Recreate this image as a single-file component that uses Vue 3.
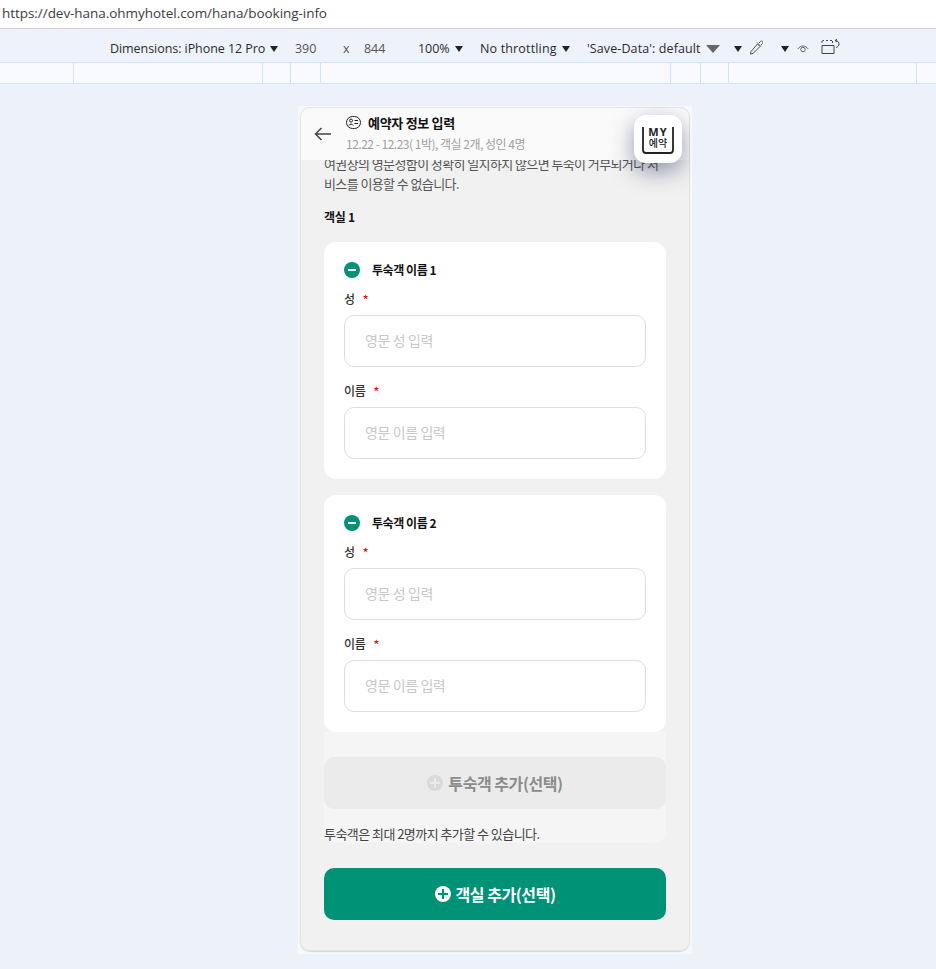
<script setup>
const rulerCols = [74, 189, 28, 30, 350, 30, 28, 188, 19]
const guests = [1, 2]
</script>

<template>
  <div class="page">
    <div class="urlbar">https://dev-hana.ohmyhotel.com/hana/booking-info</div>
    <div class="toolbar">
      <span class="tb w-dim">Dimensions: iPhone 12 Pro<i class="caret"></i></span>
      <span class="tb w-a dim">390</span>
      <span class="tb w-x dim">x</span>
      <span class="tb w-b dim">844</span>
      <span class="tb w-z">100%<i class="caret"></i></span>
      <span class="tb w-t">No throttling<i class="caret"></i></span>
      <span class="tb w-s">'Save-Data': default<i class="caret big"></i></span>
      <i class="caret solo"></i>
      <svg class="pick" width="14" height="15" viewBox="0 0 14 15" fill="none" stroke="#555" stroke-width="1">
        <path d="M8.500 4 11 6.500 4 13.500 1.500 14 2 11.500Z" />
        <path d="M8 2.500 12 6.500M10 3l1.500-1.500a1 1 0 0 1 2 2L12 5" />
      </svg>
      <i class="caret solo2"></i>
      <svg class="eye" width="12" height="10" viewBox="0 0 12 10" fill="none" stroke="#666" stroke-width="1">
        <path d="M.8 5C3.500 1 8.500 1 11.200 5" />
        <circle cx="6" cy="5.500" r="2.200" />
      </svg>
      <svg class="rot" width="20" height="16" viewBox="0 0 20 16" fill="none" stroke="#444" stroke-width="1">
        <path d="M1 6.500h12v8H1z" />
        <path d="M1 4V1.500h2M5 1.500h2M9 1.500h2.500V4" stroke-dasharray="2 1" />
        <path d="M14 1.500c3 0 4 2 4 3.500s-1 3-3 3.500M14 1.500l2-1.200M14 1.500l2 1.300" />
      </svg>
    </div>
    <div class="ruler">
      <span v-for="(w, i) in rulerCols" :key="i" class="tick" :style="{ width: w + 'px' }"></span>
    </div>

    <div class="frame">
      <div class="phone">
        <header class="head">
          <svg class="back" width="18" height="14" viewBox="0 0 18 14" fill="none" stroke="#444" stroke-width="1.500">
            <path d="M17 7H1.500M7.500 1 1.500 7l6 6" />
          </svg>
          <div class="head-text">
            <div class="head-title">
              <svg width="15" height="13" viewBox="0 0 15 13" fill="none" stroke="#222" stroke-width="1">
                <rect x="0.500" y="0.500" width="14" height="12" rx="6" />
                <circle cx="5" cy="4.600" r="1.500" />
                <path d="M2.800 9.500c.4-1.800 4-1.800 4.400 0M8.500 4.500h3.500M8.500 7.500h3.500" />
              </svg>
              <span>예약자 정보 입력</span>
            </div>
            <div class="head-sub">12.22 - 12.23( 1박), 객실 2개, 성인 4명</div>
          </div>
        </header>

        <div class="my-btn">
          <svg class="my-frame" width="32" height="27" viewBox="0 0 32 27" fill="none" stroke="#222" stroke-width="1.800">
            <path d="M1 0v23a3 3 0 0 0 3 3h24a3 3 0 0 0 3-3V0" />
          </svg>
          <span class="my-en">MY</span>
          <span class="my-ko">예약</span>
        </div>

        <div class="scroll">
          <p class="notice">여권상의 영문성함이 정확히 일치하지 않으면 투숙이 거부되거나 서비스를 이용할 수 없습니다.</p>
          <h3 class="room">객실 1</h3>

          <section v-for="n in guests" :key="n" class="card">
            <div class="card-title">
              <span class="minus"><i></i></span>
              <span class="card-name">투숙객 이름 {{ n }}</span>
            </div>
            <label class="lbl lbl-first">성<em>*</em></label>
            <div class="field">영문 성 입력</div>
            <label class="lbl">이름<em>*</em></label>
            <div class="field">영문 이름 입력</div>
          </section>

          <div class="extra">
            <button class="btn btn-off">
              <span class="plus off"></span>투숙객 추가(선택)
            </button>
            <p class="limit">투숙객은 최대 2명까지 추가할 수 있습니다.</p>
          </div>
        </div>

        <button class="btn btn-on">
          <span class="plus on"></span>객실 추가(선택)
        </button>
      </div>
    </div>
  </div>
</template>

<style>
html, body { margin: 0; background: #edf1fa; }
</style>

<style scoped>
.page {
  width: 936px;
  height: 969px;
  overflow: hidden;
  background: #edf1fa;
  font-family: "Noto Sans CJK KR", "Noto Sans", sans-serif;
}
.urlbar {
  box-sizing: border-box;
  height: 29px;
  padding-left: 2px;
  background: #fff;
  border-bottom: 1px solid #d2d2d2;
  font: 13.500px/27px "Open Sans", sans-serif;
  letter-spacing: -0.05px;
  color: #3c3c3c;
}
.toolbar {
  box-sizing: border-box;
  margin-top: 4px;
  height: 29px;
  padding: 2px 0 0 110px;
  display: flex;
  align-items: center;
  background: #eef2fb;
}
.tb {
  font: 12.500px/27px "Open Sans", sans-serif;
  letter-spacing: -0.06px;
  color: #2b2b2b;
  white-space: nowrap;
  display: flex;
  align-items: center;
}
.dim { color: #555; }
.w-dim { width: 185px; }
.w-a { width: 48px; }
.w-x { width: 21px; }
.w-b { width: 54px; }
.w-z { width: 62px; }
.w-t { width: 107px; letter-spacing: 0.16px; }
.w-s { width: 143px; letter-spacing: 0.1px; }
.caret {
  width: 0;
  height: 0;
  margin-left: 5px;
  border-left: 4px solid transparent;
  border-right: 4px solid transparent;
  border-top: 6px solid #222;
}
.caret.big {
  border-left-width: 7px;
  border-right-width: 7px;
  border-top: 8px solid #666;
}
.caret.solo { margin-left: 4px; }
.pick { margin-left: 7px; margin-top: -3px; }
.caret.solo2 { margin-left: 18px; }
.eye { margin-left: 8px; }
.rot { margin-left: 12px; margin-top: -3px; }
.ruler {
  box-sizing: border-box;
  height: 22px;
  display: flex;
  background: #f8faff;
  border-top: 1px solid #d3e2fb;
  border-bottom: 1px solid #d3e2fb;
}
.tick {
  box-sizing: border-box;
  border-right: 1px solid #d3e2fb;
  flex: none;
}
.tick:last-child { border-right: 0; }
.frame {
  width: 390px;
  margin: 22px 0 0 298px;
  padding: 1px 2px 3px;
  background: #f7f8fa;
}
.phone {
  position: relative;
  height: 844px;
  box-sizing: border-box;
  background: #f1f1f1;
  outline: 1px solid #e4e4e2;
  outline-offset: -1px;
  border-radius: 10px;
  box-shadow: 0 1px 1px #d8d8d2;
  overflow: hidden;
  width: 390px;
}
.head {
  height: 53px;
  display: flex;
  align-items: flex-start;
  background: #fafafa;
  box-sizing: border-box;
  padding: 0 0 0 14px;
}
.back { margin-top: 20px; flex: none; }
.head-text { margin-left: 14px; padding-top: 5px; }
.head-title {
  display: flex;
  align-items: center;
  gap: 7px;
  height: 20px;
  font-size: 13px;
  font-weight: 700;
  letter-spacing: -0.3px;
  color: #111;
}
.head-sub {
  margin-top: 2px;
  font-size: 12px;
  line-height: 20px;
  letter-spacing: -0.5px;
  color: #a0a0a0;
}
.my-btn {
  position: absolute;
  left: 334px;
  top: 8px;
  width: 48px;
  height: 48px;
  border-radius: 12px;
  background: #fff;
  box-shadow: 0 8px 22px rgba(50, 55, 95, 0.5);
  text-align: center;
  color: #222;
}
.my-frame { position: absolute; left: 8px; top: 12px; }
.my-en {
  position: absolute;
  left: 0;
  right: 0;
  top: 11px;
  font: 700 11px/11px "Noto Sans", sans-serif;
  letter-spacing: 1px;
}
.my-ko {
  position: absolute;
  left: 0;
  right: 0;
  top: 22px;
  font-size: 10px;
  line-height: 11px;
  font-weight: 500;
}
.scroll {
  height: 683px;
  overflow: hidden;
  padding: 0 24px;
}
.notice {
  margin: -6px 0 0;
  font-size: 13px;
  line-height: 20px;
  letter-spacing: -0.6px;
  word-break: break-all;
  color: #555;
}
.room {
  margin: 13px 0 0;
  font-size: 12px;
  line-height: 20px;
  font-weight: 700;
  color: #111;
  letter-spacing: -0.3px;
}
.card {
  box-sizing: border-box;
  height: 237px;
  margin-top: 15px;
  padding: 18px 20px 20px;
  background: #fff;
  border-radius: 12px;
}
.card + .card { margin-top: 16px; }
.card-title {
  display: flex;
  align-items: center;
  gap: 12px;
  height: 20px;
  font-size: 12px;
  font-weight: 700;
  letter-spacing: -0.45px;
  color: #111;
}
.card-name { margin-top: -1px; }
.minus {
  width: 16px;
  height: 16px;
  border-radius: 50%;
  background: #009277;
  display: flex;
  align-items: center;
  justify-content: center;
}
.minus i {
  width: 8px;
  height: 2px;
  background: #fff;
}
.lbl {
  display: block;
  height: 20px;
  margin-top: 14px;
  font-size: 12px;
  line-height: 20px;
  font-weight: 500;
  letter-spacing: -0.3px;
  color: #333;
}
.lbl-first { margin-top: 9px; }
.lbl em {
  margin-left: 8px;
  font-style: normal;
  color: #f00;
}
.field {
  box-sizing: border-box;
  height: 52px;
  margin-top: 6px;
  padding-left: 20px;
  border: 1px solid #dedede;
  border-radius: 10px;
  font-size: 14px;
  line-height: 49px;
  letter-spacing: -0.4px;
  color: #c8c8c8;
  background: #fff;
}
.extra {
  height: 111px;
  padding-top: 25px;
  box-sizing: border-box;
  background: #f5f5f5;
  border-radius: 0 0 12px 12px;
}
.btn {
  box-sizing: border-box;
  width: 342px;
  height: 52px;
  border: 0;
  border-radius: 10px;
  display: flex;
  align-items: center;
  justify-content: center;
  font-family: inherit;
  font-size: 16px;
  font-weight: 700;
  letter-spacing: -0.45px;
}
.btn-off { background: #ebebeb; color: #8c8c8c; }
.btn-on {
  margin: 25px 0 0 24px;
  background: #009277;
  color: #fff;
}
.limit {
  margin: 15px 0 0;
  font-size: 13px;
  line-height: 20px;
  letter-spacing: -0.55px;
  color: #444;
}
.plus {
  position: relative;
  width: 16px;
  height: 16px;
  margin-right: 5px;
  border-radius: 50%;
  flex: none;
}
.plus::before, .plus::after {
  content: "";
  position: absolute;
  background: currentColor;
}
.plus::before { left: 3px; right: 3px; top: 7px; height: 2px; }
.plus::after { top: 3px; bottom: 3px; left: 7px; width: 2px; }
.plus.off { background: #d9d9d9; color: #ebebeb; }
.plus.on { background: #fff; color: #009277; }
</style>
